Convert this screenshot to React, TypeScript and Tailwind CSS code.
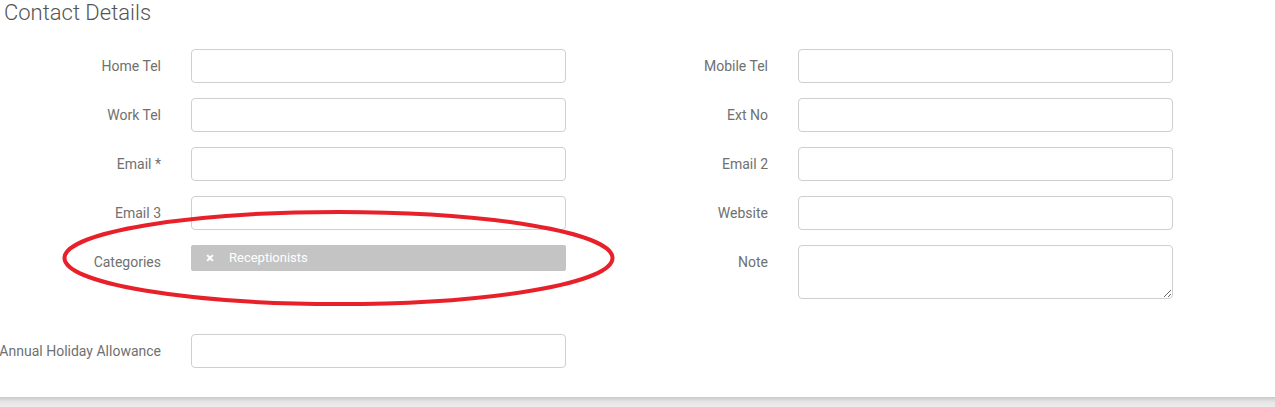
import React from "react";

const font = { fontFamily: "Roboto, 'Liberation Sans', sans-serif" };

function Row({ label, children, className = "" }: { label: string; children: React.ReactNode; className?: string }) {
  return (
    <div className={`flex items-start ${className}`}>
      <div className="w-[161px] shrink-0 h-[34px] flex items-center justify-end whitespace-nowrap text-[14px] text-[#707070]">{label}</div>
      <div className="ml-[30px] w-[375px]">{children}</div>
    </div>
  );
}

function Input() {
  return <div className="h-[34px] w-full rounded-[4px] border border-[#cfcfcf] bg-white" />;
}

export default function App() {
  return (
    <div className="relative w-[1275px] h-[407px] bg-white overflow-hidden" style={font}>
      <div className="h-[397px]">
        <h2 className="pl-[4px] text-[22px] leading-[26px] font-light text-[#555]">Contact Details</h2>
        <div className="flex mt-[23px]">
          <div className="w-[607px] flex flex-col gap-[15px]">
            <Row label="Home Tel"><Input /></Row>
            <Row label="Work Tel"><Input /></Row>
            <Row label="Email *"><Input /></Row>
            <Row label="Email 3"><Input /></Row>
            <Row label="Categories">
              <div className="h-[26px] rounded-[2px] bg-[#c4c4c4] flex items-center pl-[15px] text-white text-[13px]">
                <span className="text-[15px] font-bold w-[23px] leading-none">×</span>
                <span>Receptionists</span>
              </div>
            </Row>
            <Row label="Annual Holiday Allowance" className="mt-[40px]"><Input /></Row>
          </div>
          <div className="w-[607px] flex flex-col gap-[15px]">
            <Row label="Mobile Tel"><Input /></Row>
            <Row label="Ext No"><Input /></Row>
            <Row label="Email 2"><Input /></Row>
            <Row label="Website"><Input /></Row>
            <Row label="Note">
              <textarea className="block h-[54px] w-full rounded-[4px] border border-[#cfcfcf] bg-white resize-y" />
            </Row>
          </div>
        </div>
      </div>
      <div className="h-[10px] bg-gradient-to-b from-[#c9c9c9] via-[#e6e6e6] to-[#ececec]" />
      <svg className="absolute left-0 top-0 pointer-events-none" width="1275" height="407">
        <ellipse cx="338.5" cy="258" rx="274" ry="46" fill="none" stroke="#e8202a" strokeWidth="4" />
      </svg>
    </div>
  );
}
